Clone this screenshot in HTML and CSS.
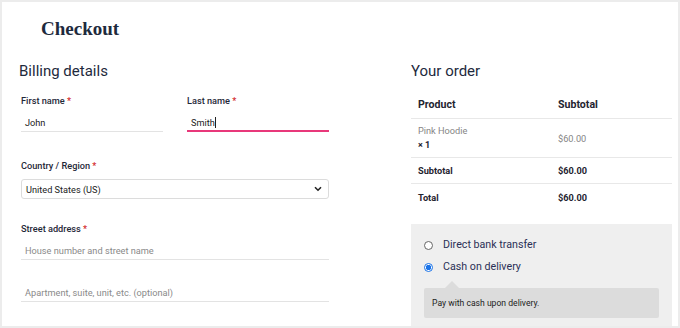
FILE: index.html
```html
<!DOCTYPE html>
<html>
<head>
<meta charset="utf-8">
<link rel="stylesheet" href="styles.css">
</head>
<body>
<div class="frame">
  <h1 class="title">Checkout</h1>
  <div class="cols">
    <section class="billing">
      <h2 class="heading">Billing details</h2>
      <div class="fields">
        <div class="row2">
          <div class="field">
            <div class="label">First name <span class="req">*</span></div>
            <div class="input">John</div>
          </div>
          <div class="field">
            <div class="label">Last name <span class="req">*</span></div>
            <div class="input focus">Smith<span class="caret"></span></div>
          </div>
        </div>
        <div class="field country">
          <div class="label">Country / Region <span class="req">*</span></div>
          <div class="select">
            <span>United States (US)</span>
            <svg class="chev" width="8" height="6" viewBox="0 0 8 6"><path d="M1 1.2 L4 4.2 L7 1.2" fill="none" stroke="#222" stroke-width="1.6"/></svg>
          </div>
        </div>
        <div class="field street">
          <div class="label">Street address <span class="req">*</span></div>
          <div class="input ph">House number and street name</div>
          <div class="input ph second">Apartment, suite, unit, etc. (optional)</div>
        </div>
      </div>
    </section>
    <section class="order">
      <h2 class="heading">Your order</h2>
      <div class="table">
        <div class="tr head">
          <div class="c1">Product</div>
          <div class="c2">Subtotal</div>
        </div>
        <div class="tr item">
          <div class="c1"><div class="pname">Pink Hoodie</div><div class="qty">× 1</div></div>
          <div class="c2 price">$60.00</div>
        </div>
        <div class="tr sum">
          <div class="c1">Subtotal</div>
          <div class="c2">$60.00</div>
        </div>
        <div class="tr sum last">
          <div class="c1">Total</div>
          <div class="c2">$60.00</div>
        </div>
      </div>
      <div class="payment">
        <div class="method"><span class="radio"></span><span class="mlabel">Direct bank transfer</span></div>
        <div class="method"><span class="radio on"></span><span class="mlabel">Cash on delivery</span></div>
        <div class="desc">Pay with cash upon delivery.</div>
      </div>
    </section>
  </div>
</div>
</body>
</html>
```
FILE: styles.css
```css
* { box-sizing: border-box; }
html, body { margin: 0; padding: 0; background: #fff; }
body { font-family: Roboto, "Noto Sans", Arial, sans-serif; color: #1e293b; }
.frame {
  width: 680px; height: 328px; overflow: hidden;
  border: 2px solid #ececec;
}
.title {
  margin: 0; padding: 15px 0 0 39px;
  font-family: "Liberation Serif", "Times New Roman", serif;
  font-weight: bold; font-size: 19px; line-height: 24px; color: #1e2a3d;
  height: 59px;
}
.cols { display: flex; gap: 81px; padding-left: 17px; }
.billing { width: 311px; flex: none; }
.order { width: 261px; flex: none; }
.heading { margin: 0; font-weight: 400; font-size: 15px; line-height: 20px; color: #1e2a3d; }
.billing .heading { margin-bottom: 13px; }
.order .heading { margin-bottom: 7px; }
.fields { padding-left: 2px; }
.label { font-size: 9.2px; font-weight: 500; line-height: 14px; color: #1f2838; }
.req { color: #d32f2f; }
.row2 { display: flex; gap: 24px; }
.row2 .field { width: 142px; }
.input {
  margin-top: 8px; height: 16px; line-height: 14px; padding: 0 4px;
  font-size: 9.2px; color: #222; border-bottom: 1px solid #e3e3e3;
}
.input.focus { border-bottom: 2px solid #e8387a; }
.caret { display: inline-block; width: 1px; height: 11px; background: #222; vertical-align: -2px; }
.country { margin-top: 27px; }
.select {
  margin-top: 6px; width: 308px; height: 20px; border: 1px solid #dcdcdc; border-radius: 3px;
  display: flex; align-items: center; justify-content: space-between;
  padding: 0 6px 0 4px; font-size: 9.2px; color: #222;
}
.street { margin-top: 23px; }
.street .input { width: 308px; }
.ph { color: #8a8a8a; }
.second { margin-top: 26px; }
.tr { display: flex; border-bottom: 1px solid #e8e8e8; font-size: 9.2px; }
.tr .c1 { width: 147px; padding-left: 7px; }
.tr .c2 { flex: 1; }
.head { height: 31px; padding-top: 2px; align-items: center; font-weight: 700; font-size: 10.6px; color: #1f2430; }
.item { height: 39px; align-items: center; }
.pname { color: #858585; line-height: 14px; }
.qty { font-weight: 700; color: #1f2430; line-height: 14px; font-size: 9px; }
.price { color: #858585; }
.sum { height: 26px; align-items: center; font-weight: 700; color: #1f2430; }
.sum.last { border-bottom: none; }
.payment {
  margin-top: 14px; background: #efefef; height: 110px; padding: 10px 13px 0 13px;
}
.method { display: flex; align-items: center; height: 22px; font-size: 10.7px; color: #2b2f56; }
.radio {
  width: 9px; height: 9px; border-radius: 50%; border: 1px solid #666; background: #fff;
  margin: 0 10px 0 0;
}
.radio.on { border: 1px solid #1a73e8; background: radial-gradient(circle, #1a73e8 0 2.5px, #fff 3px); }
.mlabel { line-height: 14px; }
.desc {
  position: relative; margin-top: 10px; background: #dcdcdc; height: 30px; border-radius: 2px;
  font-size: 8.6px; line-height: 30px; padding-left: 8px; color: #222;
}
.desc::before {
  content: ""; position: absolute; left: 21px; top: -7px;
  border-left: 7px solid transparent; border-right: 7px solid transparent;
  border-bottom: 7px solid #dcdcdc;
}
```
